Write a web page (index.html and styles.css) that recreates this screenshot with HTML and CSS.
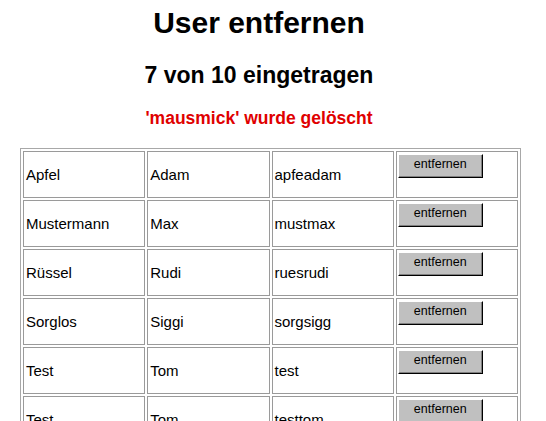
FILE: index.html
```html
<!DOCTYPE html>
<html>
<head>
    <title>User entfernen</title>
    <link rel="stylesheet" href="styles.css">
</head>
<body>
    <h1>User entfernen</h1>
    <h2>7 von 10 eingetragen</h2>
    <p class="message">'mausmick' wurde gelöscht</p>

    <table class="users">
        <tr>
            <td>Apfel</td><td>Adam</td><td>apfeadam</td>
            <td><form class="remove"><button type="button">entfernen</button></form></td>
        </tr>
        <tr>
            <td>Mustermann</td><td>Max</td><td>mustmax</td>
            <td><form class="remove"><button type="button">entfernen</button></form></td>
        </tr>
        <tr>
            <td>Rüssel</td><td>Rudi</td><td>ruesrudi</td>
            <td><form class="remove"><button type="button">entfernen</button></form></td>
        </tr>
        <tr>
            <td>Sorglos</td><td>Siggi</td><td>sorgsigg</td>
            <td><form class="remove"><button type="button">entfernen</button></form></td>
        </tr>
        <tr>
            <td>Test</td><td>Tom</td><td>test</td>
            <td><form class="remove"><button type="button">entfernen</button></form></td>
        </tr>
        <tr>
            <td>Test</td><td>Tom</td><td>testtom</td>
            <td><form class="remove"><button type="button">entfernen</button></form></td>
        </tr>
        <tr>
            <td>Zufall</td><td>Zora</td><td>zufazora</td>
            <td><form class="remove"><button type="button">entfernen</button></form></td>
        </tr>
    </table>
</body>
</html>
```

FILE: styles.css
```css
body {
    font-family: "Liberation Sans", Arial, sans-serif;
    background: #fff;
    color: #000;
    margin: 0;
    padding: 6px 0 0 20px;
}

h1 {
    font-size: 30px;
    text-align: center;
    margin: 0 28px 22px -20px;
}

h2 {
    font-size: 23px;
    text-align: center;
    margin: 0 28px 19px -20px;
}

.message {
    font-size: 17.5px;
    font-weight: bold;
    color: #e00000;
    text-align: center;
    margin: 0 28px 19px -20px;
}

.users {
    width: 501px;
    table-layout: fixed;
    border-collapse: separate;
    border-spacing: 2px;
    border: 1px solid #a8a8a8;
}

.users td {
    border: 1px solid #9a9a9a;
    padding: 1px 1px 1px 2px;
    font-size: 15px;
    vertical-align: middle;
}

.remove {
    margin: 0 0 18px 0;
}

.remove button {
    font-family: "Liberation Sans", Arial, sans-serif;
    font-size: 12.5px;
    width: 85px;
    height: 24px;
    margin: 1px 0 0 -1px;
    padding: 0 0 5px 0;
    background: #c0c0c0;
    border: 1px solid;
    border-color: #fff #000 #000 #fff;
    box-shadow: inset -1px -1px 0 #808080;
    color: #000;
}
```
